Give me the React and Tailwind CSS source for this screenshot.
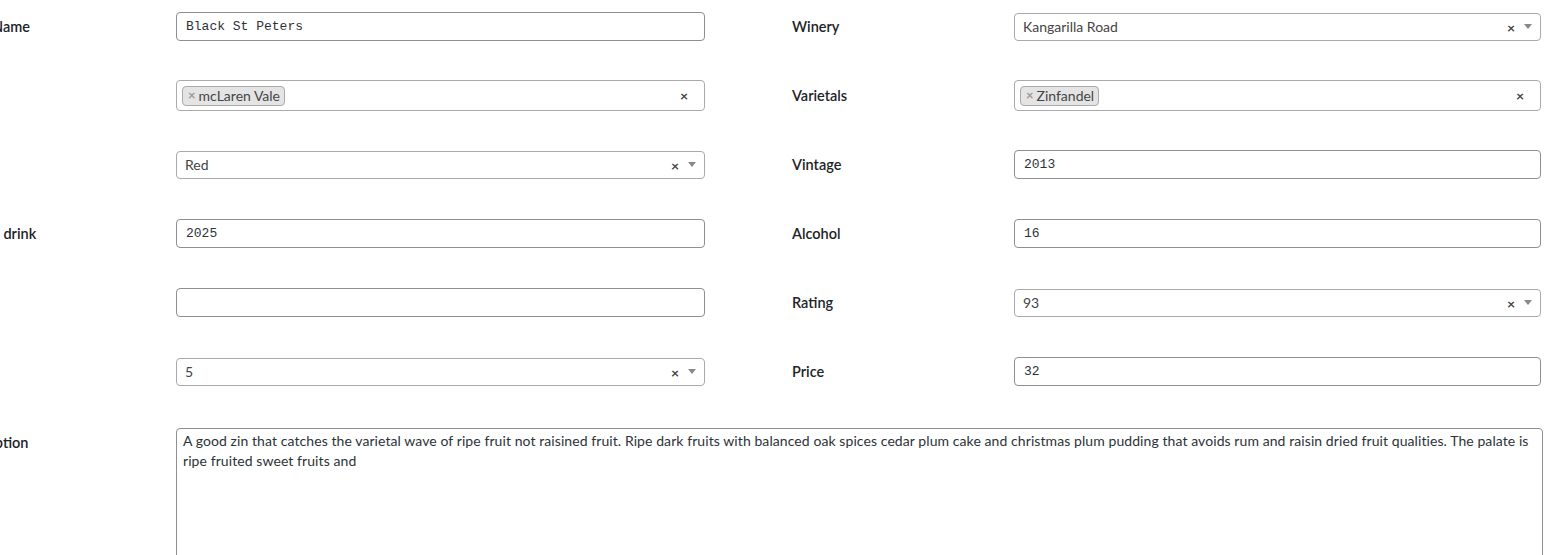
const sans = "font-['Lato','Noto_Sans',sans-serif]";
const mono = "font-['Liberation_Mono','DejaVu_Sans_Mono',monospace]";

function Label({ children }) {
  return <div className="text-[14.5px] font-semibold text-[#1d2327]">{children}</div>;
}

function TextInput({ value, className = '' }) {
  return (
    <div
      className={`flex h-[29px] items-center rounded-[4px] border border-[#8c8f94] bg-white px-[9px] text-[13px] text-[#2c3338] ${mono} ${className}`}
    >
      {value}
    </div>
  );
}

function Arrow() {
  return <span className="ml-[9px] h-0 w-0 border-x-[4px] border-t-[5px] border-x-transparent border-t-[#888]" />;
}

function SingleSelect({ value }) {
  return (
    <div className="flex h-[28px] items-center rounded-[4px] border border-[#aaa] bg-white pl-[8px] pr-[8px] text-[14px] text-[#444]">
      <span className="flex-1 truncate">{value}</span>
      <span className="mt-[2px] text-[14px] font-bold leading-none text-[#444]">×</span>
      <Arrow />
    </div>
  );
}

function MultiSelect({ value }) {
  return (
    <div className="flex h-[31px] items-center rounded-[4px] border border-[#aaa] bg-white pl-[5px] pr-[16px] text-[14px] text-[#444]">
      <span className="flex h-[20px] items-center rounded-[4px] border border-[#aaa] bg-[#e4e4e4] pl-[5px] pr-[4px]">
        <span className="mr-[3px] text-[13px] font-bold text-[#999]">×</span>
        {value}
      </span>
      <span className="flex-1" />
      <span className="text-[14px] font-bold leading-none text-[#444]">×</span>
    </div>
  );
}

const rows = [
  ['Wine Name', <TextInput value="Black St Peters" />, 'Winery', <SingleSelect value="Kangarilla Road" />],
  ['Region', <MultiSelect value="mcLaren Vale" />, 'Varietals', <MultiSelect value="Zinfandel" />],
  ['Type', <SingleSelect value="Red" />, 'Vintage', <TextInput value="2013" />],
  ['Best to drink', <TextInput value="2025" />, 'Alcohol', <TextInput value="16" />],
  ['Notes', <TextInput value="" />, 'Rating', <SingleSelect value="93" />],
  ['Stock', <SingleSelect value="5" />, 'Price', <TextInput value="32" />],
];

export default function App() {
  return (
    <div className={`h-[555px] w-[1555px] overflow-hidden bg-white ${sans}`}>
      <div className="-ml-[46px] -mt-[8px]">
        {rows.map(([l1, f1, l2, f2]) => (
          <div key={l1} className="flex h-[69px] items-center">
            <div className="w-[222px] shrink-0">
              <Label>{l1}</Label>
            </div>
            <div className="w-[529px] shrink-0">{f1}</div>
            <div className="w-[87px] shrink-0" />
            <div className="w-[222px] shrink-0">
              <Label>{l2}</Label>
            </div>
            <div className="w-[527px] shrink-0">{f2}</div>
          </div>
        ))}
        <div className="flex pt-[22px]">
          <div className="w-[222px] shrink-0 pt-[4px]">
            <Label>Description</Label>
          </div>
          <textarea
            readOnly
            className="h-[160px] w-[1367px] shrink-0 resize-none rounded-[4px] border border-[#8c8f94] px-[6px] py-[2px] text-[14px] leading-[20px] tracking-[0.08px] text-[#2c3338] outline-none"
            value="A good zin that catches the varietal wave of ripe fruit not raisined fruit. Ripe dark fruits with balanced oak spices cedar plum cake and christmas plum pudding that avoids rum and raisin dried fruit qualities. The palate is ripe fruited sweet fruits and"
          />
        </div>
      </div>
    </div>
  );
}
